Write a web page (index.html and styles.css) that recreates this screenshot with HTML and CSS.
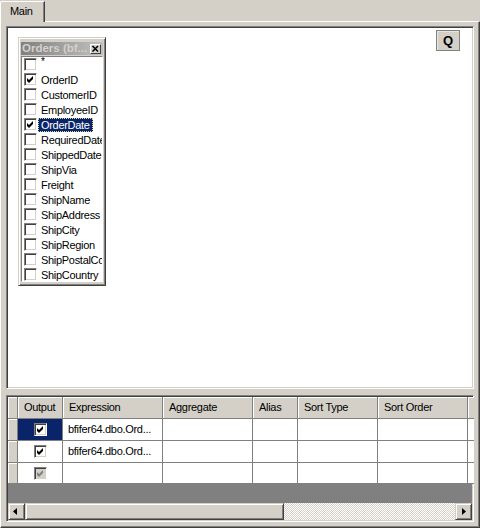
FILE: index.html
```html
<!DOCTYPE html>
<html>
<head>
<meta charset="utf-8">
<link rel="stylesheet" href="styles.css">
</head>
<body>
<div class="window">
  <div class="tabstrip"><div class="tab">Main</div></div>
  <div class="tabpanel">
    <div class="designer">
      <div class="tablebox">
        <div class="titlebar">
          <span class="title">Orders (bf...</span>
          <span class="closebtn"><svg width="9" height="8" viewBox="0 0 9 8"><path d="M1.5 1 L7 6.5 M7 1 L1.5 6.5" stroke="#000" stroke-width="1.6"/></svg></span>
        </div>
        <div class="listbox">
          <div class="item"><span class="cb"></span><span class="lbl star">*</span></div>
          <div class="item"><span class="cb"><svg class="tick" viewBox="0 0 13 13"><path d="M3 5 L5 7 L9 3 V6 L5 10 L3 8 Z"/></svg></span><span class="lbl">OrderID</span></div>
          <div class="item"><span class="cb"></span><span class="lbl">CustomerID</span></div>
          <div class="item"><span class="cb"></span><span class="lbl">EmployeeID</span></div>
          <div class="item"><span class="cb"><svg class="tick" viewBox="0 0 13 13"><path d="M3 5 L5 7 L9 3 V6 L5 10 L3 8 Z"/></svg></span><span class="lbl sel">OrderDate</span></div>
          <div class="item"><span class="cb"></span><span class="lbl">RequiredDate</span></div>
          <div class="item"><span class="cb"></span><span class="lbl">ShippedDate</span></div>
          <div class="item"><span class="cb"></span><span class="lbl">ShipVia</span></div>
          <div class="item"><span class="cb"></span><span class="lbl">Freight</span></div>
          <div class="item"><span class="cb"></span><span class="lbl">ShipName</span></div>
          <div class="item"><span class="cb"></span><span class="lbl">ShipAddress</span></div>
          <div class="item"><span class="cb"></span><span class="lbl">ShipCity</span></div>
          <div class="item"><span class="cb"></span><span class="lbl">ShipRegion</span></div>
          <div class="item"><span class="cb"></span><span class="lbl">ShipPostalCode</span></div>
          <div class="item"><span class="cb"></span><span class="lbl">ShipCountry</span></div>
        </div>
      </div>
      <div class="qbtn">Q</div>
    </div>
    <div class="gridpanel">
      <div class="grid">
        <div class="rh hdr"></div>
        <div class="hc">Output</div>
        <div class="hc">Expression</div>
        <div class="hc">Aggregate</div>
        <div class="hc">Alias</div>
        <div class="hc">Sort Type</div>
        <div class="hc">Sort Order</div>
        <div class="hc rest"></div>

        <div class="rh"></div>
        <div class="c ctr selcell"><span class="cb"><svg class="tick" viewBox="0 0 13 13"><path d="M3 5 L5 7 L9 3 V6 L5 10 L3 8 Z"/></svg></span></div>
        <div class="c">bfifer64.dbo.Ord...</div>
        <div class="c"></div>
        <div class="c"></div>
        <div class="c"></div>
        <div class="c"></div>
        <div class="c rest"></div>

        <div class="rh"></div>
        <div class="c ctr"><span class="cb"><svg class="tick" viewBox="0 0 13 13"><path d="M3 5 L5 7 L9 3 V6 L5 10 L3 8 Z"/></svg></span></div>
        <div class="c">bfifer64.dbo.Ord...</div>
        <div class="c"></div>
        <div class="c"></div>
        <div class="c"></div>
        <div class="c"></div>
        <div class="c rest"></div>

        <div class="rh"></div>
        <div class="c ctr"><span class="cb disabled"><svg class="tick" viewBox="0 0 13 13"><path d="M3 5 L5 7 L9 3 V6 L5 10 L3 8 Z"/></svg></span></div>
        <div class="c"></div>
        <div class="c"></div>
        <div class="c"></div>
        <div class="c"></div>
        <div class="c"></div>
        <div class="c rest"></div>
      </div>
      <div class="emptyarea"></div>
      <div class="hscroll">
        <div class="sbtn"><svg width="15" height="15" viewBox="0 0 15 15"><path d="M8 4 L4 7.5 L8 11 Z" fill="#000"/></svg></div>
        <div class="thumb"></div>
        <div class="track"></div>
        <div class="sbtn"><svg width="15" height="15" viewBox="0 0 15 15"><path d="M6 4 L10 7.5 L6 11 Z" fill="#000"/></svg></div>
      </div>
    </div>
  </div>
</div>
</body>
</html>
```

FILE: styles.css
```css
* { box-sizing: border-box; }
html, body { margin: 0; padding: 0; }
body {
  width: 480px;
  height: 528px;
  overflow: hidden;
  background: #d4d0c8;
  font-family: "Liberation Sans", Arial, sans-serif;
  font-size: 11px;
  letter-spacing: -0.3px;
  color: #000;
}
.window { display: flex; flex-direction: column; height: 528px; }

.tabstrip { height: 21px; display: flex; align-items: flex-end; position: relative; z-index: 1; }
.tab {
  width: 45px;
  height: 21px;
  margin-bottom: -1px;
  background: #d4d0c8;
  border-top: 1px solid #fff;
  border-left: 1px solid #fff;
  border-right: 1px solid #404040;
  box-shadow: inset -1px 0 0 #808080;
  border-top-left-radius: 2px;
  padding: 3px 0 0 9px;
  line-height: 13px;
}

.tabpanel {
  flex: 1;
  border: 1px solid;
  border-color: #fff #404040 #404040 #fff;
  box-shadow: inset -1px -1px 0 #808080;
  padding: 4px 5px 0 5px;
  display: flex;
  flex-direction: column;
}

.designer {
  position: relative;
  height: 363px;
  background: #fff;
  border: 1px solid;
  border-color: #808080 #fff #fff #808080;
  box-shadow: inset 1px 1px 0 #404040, inset -1px -1px 0 #d4d0c8;
}

.tablebox {
  position: absolute;
  left: 11px;
  top: 10px;
  width: 88px;
  height: 249px;
  background: #d4d0c8;
  border: 1px solid;
  border-color: #d4d0c8 #404040 #404040 #d4d0c8;
  box-shadow: inset 1px 1px 0 #fff, inset -1px -1px 0 #808080;
  padding: 4px 2px 3px 2px;
  display: flex;
  flex-direction: column;
  gap: 1px;
}
.titlebar {
  height: 13px;
  background: linear-gradient(to right, #808080, #c0c0c0);
  display: flex;
  align-items: center;
  justify-content: space-between;
  padding: 0 2px 0 1px;
}
.title {
  font-family: "Liberation Sans", Arial, sans-serif;
  font-weight: bold;
  font-size: 11.5px;
  letter-spacing: 0;
  color: #d4d0c8;
  white-space: nowrap;
  line-height: 13px;
}
.closebtn {
  width: 11px;
  height: 10px;
  flex: none;
  background: #d4d0c8;
  border: 1px solid;
  border-color: #fff #404040 #404040 #fff;
  display: flex;
  align-items: center;
  justify-content: center;
}
.listbox {
  flex: 1;
  background: #fff;
  border: 1px solid;
  border-color: #808080 #fff #fff #808080;
  overflow: hidden;
  padding-left: 1px;
}
.item {
  height: 15px;
  display: flex;
  align-items: center;
  white-space: nowrap;
}
.item .cb { margin-left: 1px; }
.lbl {
  margin-left: 1px;
  padding: 0 3px;
  height: 14px;
  line-height: 14px;
}
.lbl.star { font-size: 10px; align-self: flex-start; line-height: 9px; }
.lbl.sel {
  background: #0a246a;
  color: #fff;
  outline: 1px dotted #e0d890;
  outline-offset: -1px;
}

.cb {
  width: 13px;
  height: 13px;
  flex: none;
  background: #fff;
  border: 1px solid;
  border-color: #808080 #fff #fff #808080;
  box-shadow: inset 1px 1px 0 #404040, inset -1px -1px 0 #d4d0c8;
  display: inline-block;
  position: relative;
}
.tick { width: 13px; height: 13px; position: absolute; left: -1px; top: -1px; fill: #000; }
.cb.disabled { background: #d4d0c8; }
.cb.disabled .tick { fill: #808080; }

.qbtn {
  position: absolute;
  top: 3px;
  right: 13px;
  width: 24px;
  height: 21px;
  background: #d4d0c8;
  border: 1px solid #808080;
  box-shadow: inset 1px 1px 0 #e8e6e0;
  font-family: "Liberation Sans", Arial, sans-serif;
  font-weight: bold;
  font-size: 13px;
  letter-spacing: 0;
  display: flex;
  align-items: center;
  justify-content: center;
}

.gridpanel {
  margin-top: 6px;
  height: 127px;
  border: 1px solid;
  border-color: #808080 #fff #fff #808080;
  box-shadow: inset 1px 1px 0 #404040, inset -1px -1px 0 #d4d0c8;
  padding: 1px;
  display: flex;
  flex-direction: column;
  background: #d4d0c8;
}
.grid {
  display: grid;
  grid-template-columns: 10px 45px 100px 90px 45px 80px 90px 1fr;
  grid-template-rows: 22px 22px 22px 21px;
}
.rh {
  background: #d4d0c8;
  border-right: 1px solid #808080;
  border-bottom: 1px solid #808080;
  box-shadow: inset 1px 1px 0 #fff;
}
.hc {
  background: #d4d0c8;
  border-right: 1px solid #808080;
  border-bottom: 1px solid #808080;
  box-shadow: inset 1px 1px 0 #fff;
  padding-left: 6px;
  line-height: 21px;
  white-space: nowrap;
  overflow: hidden;
}
.hc.rest, .c.rest { border-right: none; }
.c {
  background: #fff;
  border-right: 1px solid #808080;
  border-bottom: 1px solid #808080;
  padding-left: 5px;
  line-height: 21px;
  white-space: nowrap;
  overflow: hidden;
}
.c.ctr {
  padding-left: 0;
  display: flex;
  align-items: center;
  justify-content: center;
}
.c.selcell { background: #0a246a; }

.emptyarea { height: 19px; background: #808080; }

.hscroll { height: 17px; display: flex; }
.sbtn, .thumb {
  background: #d4d0c8;
  border: 1px solid;
  border-color: #d4d0c8 #404040 #404040 #d4d0c8;
  box-shadow: inset 1px 1px 0 #fff, inset -1px -1px 0 #808080;
}
.sbtn { width: 17px; display: flex; align-items: center; justify-content: center; }
.thumb { width: 259px; }
.track {
  flex: 1;
  background-color: #d4d0c8;
  background-image: repeating-conic-gradient(#ffffff 0 25%, #d4d0c8 0 50%);
  background-size: 2px 2px;
}
```
